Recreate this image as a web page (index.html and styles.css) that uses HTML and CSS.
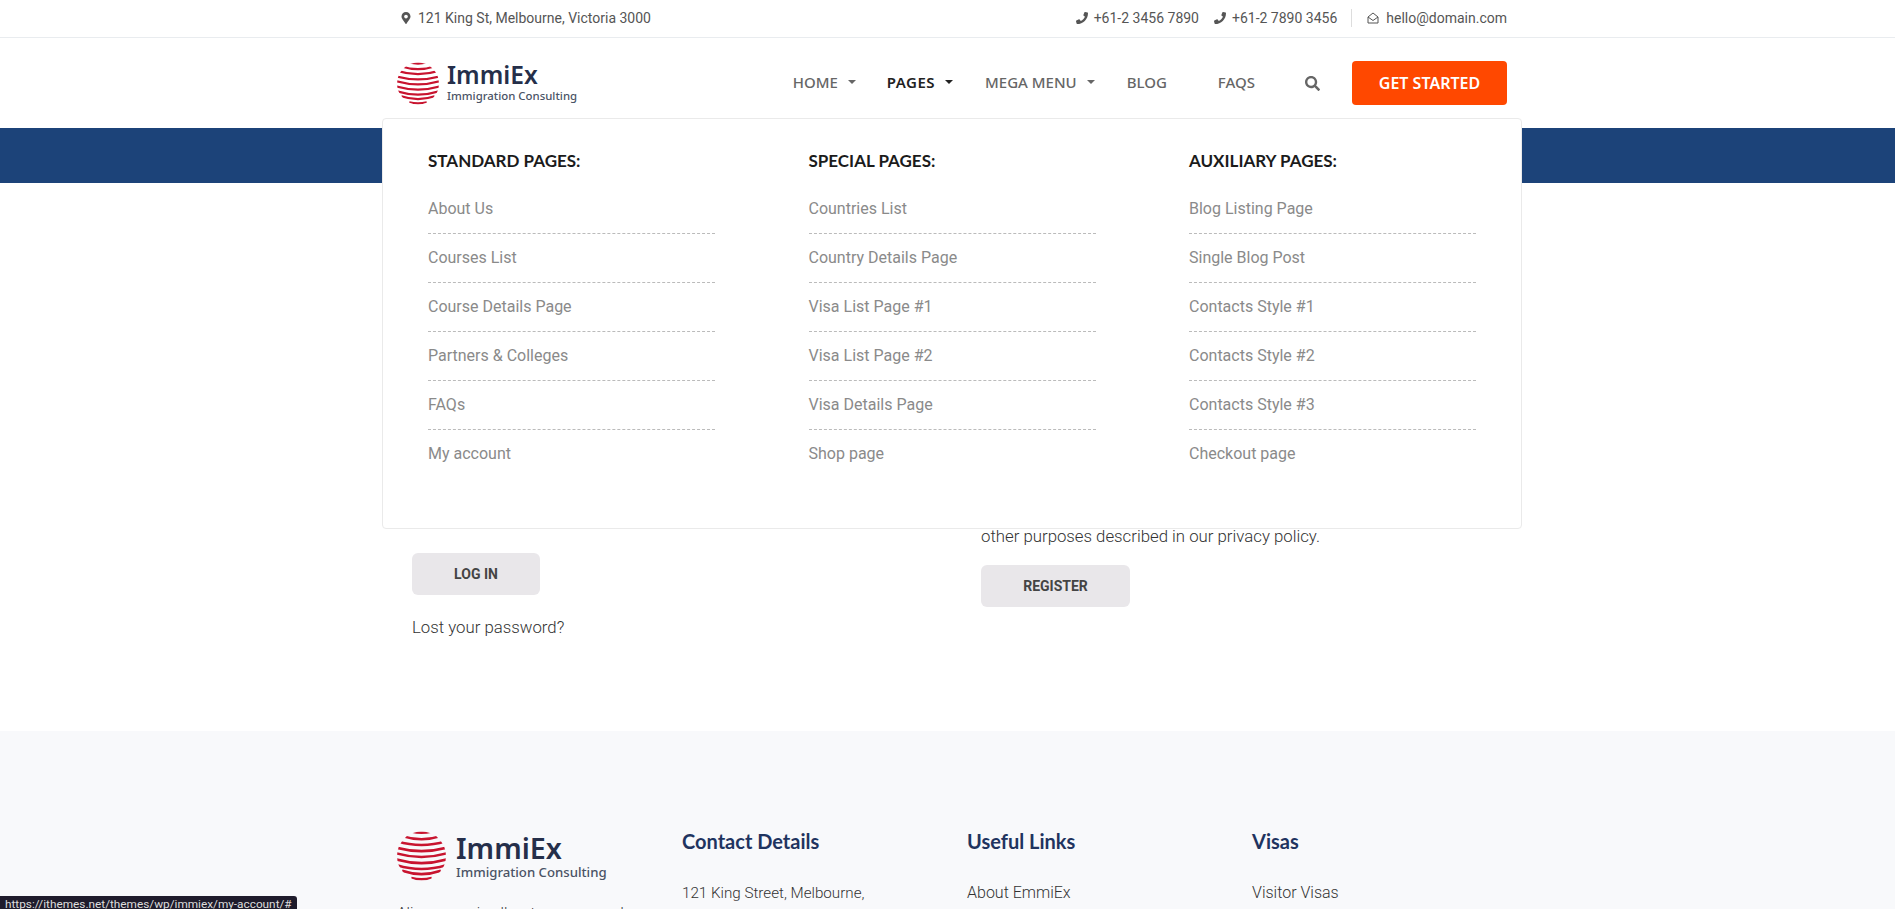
FILE: index.html
```html
<!DOCTYPE html>
<html>
	<head>
		<meta charset="UTF-8">
		<title>ImmiEx - My account</title>
		<link rel="stylesheet" href="styles.css">
	</head>
	<body>
		<svg class="defs" width="0" height="0">
			<defs>
				<clipPath id="globe_clip"><circle cx="24" cy="24" r="24"/></clipPath>
				<g id="globe">
					<g clip-path="url(#globe_clip)" fill="none" stroke="#c8142f" stroke-width="2.5">
						<path d="M14 0 Q24 2.4 34 0"/>
						<path d="M5 4.5 Q24 10.5 43 4.5"/>
						<path d="M0 9.5 Q24 17 48 9.5"/>
						<path d="M-2 15.5 Q24 23 50 15.5"/>
						<path d="M-2 21 Q24 29 50 21"/>
						<path d="M-2 27 Q24 35 50 27"/>
						<path d="M0 33 Q24 40.5 48 33"/>
						<path d="M5 38.5 Q24 45 43 38.5"/>
						<path d="M14 45.5 Q24 48 34 45.5"/>
					</g>
				</g>
			</defs>
		</svg>

		<div class="topbar">
			<div class="wrap topbar_in">
				<div class="top_item">
					<svg class="ico" viewBox="0 0 384 512"><path d="M172.268 501.67C26.97 291.031 0 256.4 0 192 0 85.961 85.961 0 192 0s192 85.961 192 192c0 64.4-26.97 99.031-172.268 309.67-9.535 13.774-29.93 13.773-39.464 0zM192 272c44.183 0 80-35.817 80-80s-35.817-80-80-80-80 35.817-80 80 35.817 80 80 80z"/></svg>
					121 King St, Melbourne, Victoria 3000
				</div>
				<div class="top_right">
					<div class="top_item">
						<svg class="ico" viewBox="0 0 512 512"><path d="M493.4 24.6l-104-24c-11.3-2.6-22.9 3.3-27.5 13.9l-48 112c-4.2 9.8-1.4 21.3 6.9 28l60.6 49.6c-36 76.7-98.9 140.5-177.2 177.2l-49.6-60.6c-6.8-8.3-18.2-11.1-28-6.9l-112 48C3.9 366.5-2 378.1.6 389.4l24 104C27.1 504.2 36.7 512 48 512c256.1 0 464-207.5 464-464 0-11.2-7.7-20.9-18.6-23.4z"/></svg>
						+61-2 3456 7890
					</div>
					<div class="top_item">
						<svg class="ico" viewBox="0 0 512 512"><path d="M493.4 24.6l-104-24c-11.3-2.6-22.9 3.3-27.5 13.9l-48 112c-4.2 9.8-1.4 21.3 6.9 28l60.6 49.6c-36 76.7-98.9 140.5-177.2 177.2l-49.6-60.6c-6.8-8.3-18.2-11.1-28-6.9l-112 48C3.9 366.5-2 378.1.6 389.4l24 104C27.1 504.2 36.7 512 48 512c256.1 0 464-207.5 464-464 0-11.2-7.7-20.9-18.6-23.4z"/></svg>
						+61-2 7890 3456
					</div>
					<div class="top_item top_mail">
						<svg class="ico ico_line" viewBox="0 0 24 24"><path d="M2 10 L12 2 L22 10 V22 H2 Z M2 10 L12 17 L22 10"/></svg>
						hello@domain.com
					</div>
				</div>
			</div>
		</div>

		<header class="header">
			<div class="wrap header_in">
				<a class="logo">
					<svg class="globe" viewBox="0 0 48 48"><use href="#globe"/></svg>
					<span class="logo_text">
						<span class="logo_name">ImmiEx</span>
						<span class="logo_sub">Immigration Consulting</span>
					</span>
				</a>
				<nav class="nav">
					<a class="nav_link nav_home has_sub">HOME</a>
					<a class="nav_link nav_pages has_sub active">PAGES</a>
					<a class="nav_link nav_mega has_sub">MEGA MENU</a>
					<a class="nav_link nav_blog">BLOG</a>
					<a class="nav_link nav_faqs">FAQS</a>
					<svg class="nav_search" viewBox="0 0 512 512"><path d="M505 442.7L405.3 343c-4.5-4.5-10.6-7-17-7H372c27.6-35.3 44-79.7 44-128C416 93.1 322.9 0 208 0S0 93.1 0 208s93.1 208 208 208c48.3 0 92.7-16.4 128-44v16.3c0 6.4 2.5 12.5 7 17l99.7 99.7c9.4 9.4 24.6 9.4 33.9 0l28.3-28.3c9.4-9.4 9.4-24.6.1-34zM208 336c-70.7 0-128-57.2-128-128 0-70.7 57.2-128 128-128 70.7 0 128 57.2 128 128 0 70.7-57.2 128-128 128z"/></svg>
					<a class="cta">GET STARTED</a>
				</nav>
			</div>
			<div class="mega">
				<div class="mega_col">
					<h4>STANDARD PAGES:</h4>
					<ul>
						<li>About Us</li>
						<li>Courses List</li>
						<li>Course Details Page</li>
						<li>Partners &amp; Colleges</li>
						<li>FAQs</li>
						<li>My account</li>
					</ul>
				</div>
				<div class="mega_col">
					<h4>SPECIAL PAGES:</h4>
					<ul>
						<li>Countries List</li>
						<li>Country Details Page</li>
						<li>Visa List Page #1</li>
						<li>Visa List Page #2</li>
						<li>Visa Details Page</li>
						<li>Shop page</li>
					</ul>
				</div>
				<div class="mega_col">
					<h4>AUXILIARY PAGES:</h4>
					<ul>
						<li>Blog Listing Page</li>
						<li>Single Blog Post</li>
						<li>Contacts Style #1</li>
						<li>Contacts Style #2</li>
						<li>Contacts Style #3</li>
						<li>Checkout page</li>
					</ul>
				</div>
			</div>
		</header>

		<div class="band"></div>

		<main class="wrap account">
			<div class="login_col">
				<a class="btn btn_login">LOG IN</a>
				<p class="lost">Lost your password?</p>
			</div>
			<div class="reg_col">
				<p class="policy">other purposes described in our privacy policy.</p>
				<a class="btn btn_reg">REGISTER</a>
			</div>
		</main>

		<footer class="footer">
			<div class="wrap footer_in">
				<div class="foot_about">
					<a class="logo logo_big">
						<svg class="globe" viewBox="0 0 48 48"><use href="#globe"/></svg>
						<span class="logo_text">
							<span class="logo_name">ImmiEx</span>
							<span class="logo_sub">Immigration Consulting</span>
						</span>
					</a>
					<p>Aliquam orci nulla, ut corporm sed</p>
				</div>
				<div class="foot_col">
					<h5>Contact Details</h5>
					<p class="foot_addr">121 King Street, Melbourne,<br>Victoria 3000, Australia</p>
				</div>
				<div class="foot_col">
					<h5>Useful Links</h5>
					<p>About EmmiEx</p>
				</div>
				<div class="foot_col">
					<h5>Visas</h5>
					<p>Visitor Visas</p>
				</div>
			</div>
		</footer>

		<div class="status">https://ithemes.net/themes/wp/immiex/my-account/#</div>
	</body>
</html>
```

FILE: styles.css
```css
html, body {
	margin : 0; padding : 0;
	height : 909px;
	overflow : hidden;
}
body {
	font-family : "Roboto", sans-serif;
	font-size : 16px;
	color : #555;
	background : #fff;
	position : relative;
}
h4, h5, p, ul, li {
	margin : 0; padding : 0;
	list-style-type : none;
}
.defs {
	position : absolute;
}
.wrap {
	width : 1127px;
	margin : 0 auto;
	box-sizing : border-box;
}

.topbar {
	height : 37px;
	border-bottom : 1px solid #e9ecef;
	font-size : 14px;
	color : #555;
}
.topbar_in {
	height : 35px;
	display : flex;
	align-items : center;
	justify-content : space-between;
	padding : 0 4px 0 16px;
}
.top_right {
	display : flex;
	align-items : center;
	gap : 15px;
}
.top_item {
	display : flex;
	align-items : center;
	gap : 6px;
}
.top_mail {
	border-left : 1px solid #ddd;
	padding-left : 15px;
	margin-left : -1px;
	height : 18px;
	gap : 7px;
}
.ico {
	width : 12px;
	height : 12px;
	fill : #555;
}
.ico_line {
	fill : none;
	stroke : #555;
	stroke-width : 2;
}

.header {
	height : 90px;
	position : relative;
}
.header_in {
	height : 90px;
	display : flex;
	align-items : center;
	justify-content : space-between;
	padding-right : 4px;
}
.logo {
	display : flex;
	align-items : center;
	gap : 8px;
	margin-left : 13px;
}
.globe {
	width : 42px;
	height : 45px;
}
.logo_text {
	display : flex;
	flex-direction : column;
	color : #252f4a;
	font-family : "Noto Sans", sans-serif;
}
.logo_name {
	font-size : 24.6px;
	font-weight : 600;
	line-height : 26px;
	margin-top : -2px;
}
.logo_sub {
	font-size : 11.4px;
	font-weight : 500;
	line-height : 15px;
	color : #4a5365;
}

.nav {
	display : flex;
	align-items : center;
	font-family : "Noto Sans", sans-serif;
	font-size : 15px;
	font-weight : 500;
	color : #666;
}
.nav_link {
	display : flex;
	align-items : center;
	padding-bottom : 2px;
}
.has_sub::after {
	content : "";
	margin-left : 10px;
	border : solid transparent;
	border-width : 4px 4px 0;
	border-top-color : #666;
}
.active {
	color : #222;
	font-weight : 600;
	letter-spacing : .5px;
}
.active::after {
	border-top-color : #222;
}
.nav_pages {
	margin-left : 31px;
}
.nav_mega {
	margin-left : 32px;
}
.nav_blog {
	margin-left : 32px;
}
.nav_faqs {
	margin-left : 51px;
}
.nav_search {
	width : 15px;
	height : 15px;
	fill : #666;
	margin-left : 50px;
}
.cta {
	width : 155px;
	height : 44px;
	margin-left : 32px;
	display : flex;
	align-items : center;
	justify-content : center;
	background : #ff4800;
	color : #fff;
	border-radius : 4px;
	font-size : 16px;
	font-weight : 600;
}

.mega {
	position : absolute;
	left : 382px;
	top : 80px;
	width : 1140px;
	height : 411px;
	box-sizing : border-box;
	padding : 32px 45px 0;
	background : #fff;
	border : 1px solid #eaeaea;
	border-radius : 4px;
	display : grid;
	grid-template-columns : repeat(3, 287px);
	column-gap : 93.5px;
	z-index : 5;
}
.mega h4 {
	font-family : "Lato", sans-serif;
	font-size : 17px;
	font-weight : 700;
	color : #1b1b1b;
	line-height : 20px;
	margin-bottom : 14px;
}
.mega li {
	height : 48px;
	line-height : 48px;
	border-bottom : 1px dashed #bbb;
	color : #8a8a8a;
}
.mega li:last-child {
	border : none;
}

.band {
	height : 55px;
	background : #1c4379;
}

.account {
	height : 548px;
	padding-left : 28px;
	display : flex;
}
.login_col {
	width : 569px;
	padding-top : 370px;
}
.reg_col {
	padding-top : 341px;
}
.policy, .lost {
	font-weight : 300;
	font-size : 16.8px;
	line-height : 24px;
	color : #333;
}
.btn {
	display : flex;
	align-items : center;
	justify-content : center;
	height : 42px;
	background : #e9e7ea;
	border-radius : 6px;
	font-size : 14px;
	font-weight : 700;
	color : #444;
}
.btn_login {
	width : 128px;
}
.btn_reg {
	width : 149px;
	margin-top : 17px;
}
.lost {
	margin-top : 20px;
}

.footer {
	height : 178px;
	background : #f8f9fb;
}
.footer_in {
	display : grid;
	grid-template-columns : repeat(4, 285px);
	padding-top : 100px;
	padding-left : 13px;
}
.logo_big {
	margin-left : 0;
	gap : 10px;
}
.logo_big .globe {
	width : 49px;
	height : 50px;
}
.logo_big .logo_name {
	font-size : 28.7px;
	line-height : 32px;
	margin-top : 0;
}
.logo_big .logo_sub {
	font-size : 13.2px;
	line-height : 16px;
}
.foot_about p {
	margin-top : 23px;
	font-size : 15.2px;
	font-weight : 300;
	color : #333;
}
.foot_col h5 {
	font-family : "Lato", sans-serif;
	font-size : 20px;
	font-weight : 700;
	color : #1f3460;
	line-height : 24px;
	margin-top : -2px;
}
.foot_col p {
	margin-top : 28px;
	line-height : 24px;
	font-weight : 300;
	color : #333;
}
.foot_col .foot_addr {
	font-size : 15.2px;
}

.status {
	position : absolute;
	left : 0;
	bottom : 0;
	height : 13px;
	padding : 0 5px;
	background : #1f1c2c;
	color : #ddd;
	border-radius : 0 3px 0 0;
	font-size : 11.8px;
	line-height : 16px;
	overflow : hidden;
	z-index : 9;
}
```
